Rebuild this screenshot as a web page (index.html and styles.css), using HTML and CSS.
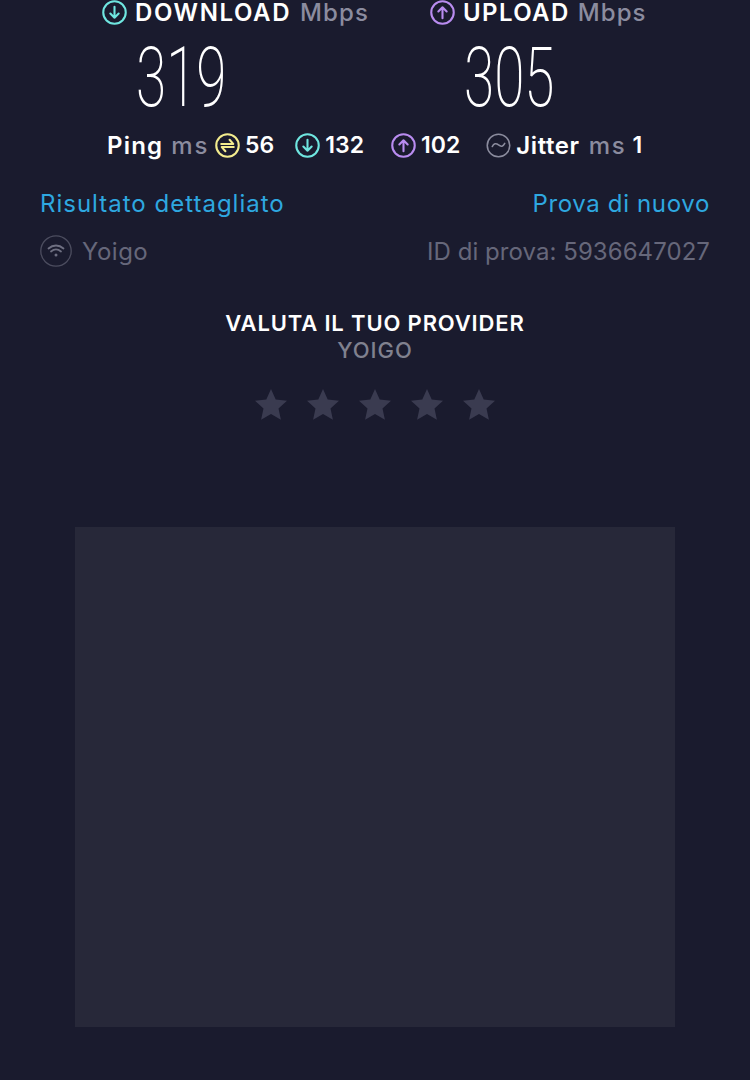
FILE: index.html
```html
<!DOCTYPE html>
<html lang="it">
<head>
<meta charset="utf-8">
<title>Speedtest</title>
<link rel="stylesheet" href="styles.css">
</head>
<body>
<main class="page">
  <section class="speeds">
    <div class="speed">
      <div class="speed-head">
        <svg class="ic ic-lg" viewBox="0 0 24 24"><circle cx="12" cy="12" r="10.800" class="ring-cyan"/><path d="M12 6.500v10.500M8 13l4 4 4-4" class="line-cyan"/></svg>
        <span class="strong">DOWNLOAD</span><span class="unit">Mbps</span>
      </div>
      <div class="value"><span class="value-in">319</span></div>
    </div>
    <div class="speed">
      <div class="speed-head speed-head-up">
        <svg class="ic ic-lg" viewBox="0 0 24 24"><circle cx="12" cy="12" r="10.800" class="ring-purple"/><path d="M12 17.500V7M8 11l4-4 4 4" class="line-purple"/></svg>
        <span class="strong">UPLOAD</span><span class="unit">Mbps</span>
      </div>
      <div class="value"><span class="value-in">305</span></div>
    </div>
  </section>

  <section class="metrics">
    <span class="strong label">Ping</span><span class="unit m-unit">ms</span>
    <svg class="ic ic-md m-ping" viewBox="0 0 24 24"><circle cx="12" cy="12" r="10.800" class="ring-yellow"/><path d="M6 10.500h11.500L14 6.500M18 13.500H6.500l3.500 4" class="line-yellow"/></svg>
    <span class="strong m-val">56</span>
    <svg class="ic ic-md m-down" viewBox="0 0 24 24"><circle cx="12" cy="12" r="10.800" class="ring-cyan"/><path d="M12 6.500v10.500M8 13l4 4 4-4" class="line-cyan"/></svg>
    <span class="strong m-val">132</span>
    <svg class="ic ic-md m-up" viewBox="0 0 24 24"><circle cx="12" cy="12" r="10.800" class="ring-purple"/><path d="M12 17.500V7M8 11l4-4 4 4" class="line-purple"/></svg>
    <span class="strong m-val">102</span>
    <svg class="ic ic-md m-jit" viewBox="0 0 24 24"><circle cx="12" cy="12" r="10.800" class="ring-grey"/><path d="M6 13c1.500-3 3.500-3.500 6-1.500s4.500 1.500 6-1.500" class="line-grey"/></svg>
    <span class="strong label-j">Jitter</span><span class="unit m-unit2">ms</span><span class="strong m-last">1</span>
  </section>

  <section class="links">
    <a class="link link-a">Risultato dettagliato</a>
    <a class="link link-b">Prova di nuovo</a>
  </section>

  <section class="info">
    <div class="isp">
      <svg class="ic ic-wifi" viewBox="0 0 32 32"><circle cx="16" cy="16" r="15.200" class="ring-wifi"/><path d="M8.500 13.500c4.500-4 10.500-4 15 0M11 16.500c3-2.500 7-2.500 10 0" class="line-wifi"/><circle cx="16" cy="20" r="1.500" class="dot-wifi"/></svg>
      <span class="isp-name">Yoigo</span>
    </div>
    <span>ID di prova: 5936647027</span>
  </section>

  <section class="rate">
    <h2 class="rate-title">VALUTA IL TUO PROVIDER</h2>
    <p class="rate-isp">YOIGO</p>
    <div class="stars">
      <svg class="star" viewBox="0 0 34 34"><path d="M17 1l4.700 10.600 11.300 1.200-8.500 7.600 2.400 11.300L17 26l-9.900 5.700 2.400-11.300L1 12.800l11.300-1.200z"/></svg>
      <svg class="star" viewBox="0 0 34 34"><path d="M17 1l4.700 10.600 11.300 1.200-8.500 7.600 2.400 11.300L17 26l-9.900 5.700 2.400-11.300L1 12.800l11.300-1.200z"/></svg>
      <svg class="star" viewBox="0 0 34 34"><path d="M17 1l4.700 10.600 11.300 1.200-8.500 7.600 2.400 11.300L17 26l-9.900 5.700 2.400-11.300L1 12.800l11.300-1.200z"/></svg>
      <svg class="star" viewBox="0 0 34 34"><path d="M17 1l4.700 10.600 11.300 1.200-8.500 7.600 2.400 11.300L17 26l-9.900 5.700 2.400-11.300L1 12.800l11.300-1.200z"/></svg>
      <svg class="star" viewBox="0 0 34 34"><path d="M17 1l4.700 10.600 11.300 1.200-8.500 7.600 2.400 11.300L17 26l-9.900 5.700 2.400-11.300L1 12.800l11.300-1.200z"/></svg>
    </div>
  </section>

  <div class="ad"></div>
</main>
</body>
</html>
```

FILE: styles.css
```css
* { box-sizing: border-box; }
html, body { margin: 0; padding: 0; }
body {
  width: 750px;
  height: 1080px;
  overflow: hidden;
  background: #1a1b2e;
  color: #fff;
  font-family: Inter, "Noto Sans", sans-serif;
}
.page { display: flex; flex-direction: column; }

.ic { display: block; flex: none; fill: none; }
.ic-lg { width: 25px; height: 25px; margin-right: 8px; }
.ic-md { width: 25px; height: 25px; }

.ring-cyan, .line-cyan { stroke: #6fe6e0; stroke-width: 2; stroke-linecap: round; stroke-linejoin: round; }
.ring-purple, .line-purple { stroke: #b98cf0; stroke-width: 2; stroke-linecap: round; stroke-linejoin: round; }
.ring-yellow, .line-yellow { stroke: #f3ec8e; stroke-width: 2; stroke-linecap: round; stroke-linejoin: round; }
.ring-grey, .line-grey { stroke: #8b8c9e; stroke-width: 1.5; stroke-linecap: round; }
.ring-wifi { stroke: #4c4d5f; stroke-width: 1.3; }
.line-wifi { stroke: #6f7082; stroke-width: 1.8; stroke-linecap: round; }
.dot-wifi { fill: #6f7082; }

.strong { font-weight: 600; color: #fff; }
.unit { font-weight: 500; color: #8b8c9f; }

.speeds { display: flex; padding-left: 102px; gap: 61px; height: 130px; }
.speed { display: flex; flex-direction: column; }
.speed-head { display: flex; align-items: center; height: 25px; font-size: 24px; line-height: 25px; }
.speed-head .strong { letter-spacing: 1.6px; }
.speed-head .unit { margin-left: 9px; letter-spacing: 1.1px; }
.speed-head-up .strong { letter-spacing: 1.4px; }
.speed-head-up .unit { margin-left: 8px; }
.value { padding-left: 34px; height: 88px; margin-top: 9px; }
.value-in {
  display: inline-block;
  font-family: Roboto, sans-serif;
  font-weight: 200;
  font-size: 83px;
  line-height: 88px;
  transform: scaleX(0.66);
  transform-origin: left center;
}

.metrics { display: flex; align-items: center; padding-left: 107px; height: 30px; font-size: 23px; }
.label { font-size: 24px; letter-spacing: 1.2px; }
.m-unit { margin-left: 8px; font-size: 24px; letter-spacing: 1.8px; }
.m-ping { margin-left: 6px; }
.m-val { margin-left: 5px; }
.m-down { margin-left: 21px; }
.m-up { margin-left: 27px; }
.m-jit { margin-left: 26px; }
.label-j { margin-left: 5px; font-size: 24px; letter-spacing: 0.6px; }
.m-unit2 { margin-left: 9px; font-size: 24px; letter-spacing: 1.8px; }
.m-last { margin-left: 6px; }

.links { display: flex; justify-content: space-between; padding: 0 40px; margin-top: 29px; font-size: 24px; line-height: 30px; }
.link { color: #2ea8e0; font-weight: 400; }
.link-a { letter-spacing: 1px; }
.link-b { letter-spacing: 0.65px; }

.info { display: flex; justify-content: space-between; align-items: center; padding: 0 40px; margin-top: 16px; height: 32px; font-size: 24px; letter-spacing: 0.06px; color: #66677a; }
.isp { display: flex; align-items: center; gap: 10px; }
.isp-name { letter-spacing: 0.5px; }
.ic-wifi { width: 32px; height: 32px; }

.rate { display: flex; flex-direction: column; align-items: center; margin-top: 43px; }
.rate-title { margin: 0; font-size: 22px; line-height: 27px; font-weight: 600; color: #fff; letter-spacing: 0.85px; }
.rate-isp { margin: 0; font-size: 22px; line-height: 27px; font-weight: 500; color: #80818f; letter-spacing: 1px; }
.stars { display: flex; gap: 18px; margin-top: 24px; }
.star { display: block; width: 34px; height: 34px; fill: #3a3b50; }

.ad { width: 600px; height: 500px; margin: 105px auto 0; background: #272839; }
```
